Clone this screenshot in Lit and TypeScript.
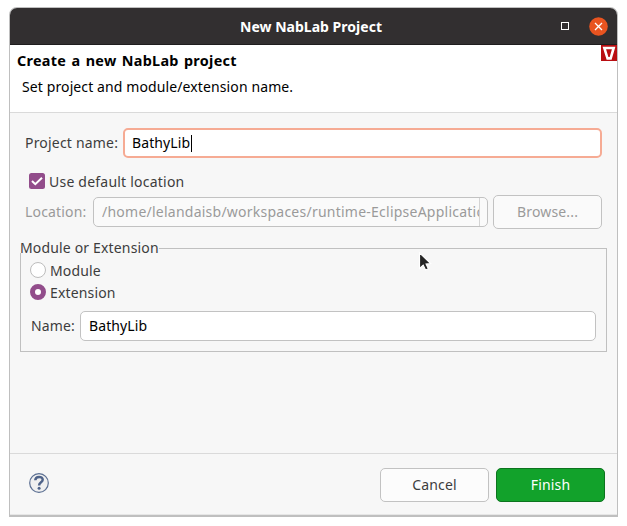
import { LitElement, html, css } from "lit";
import { customElement, state } from "lit/decorators.js";

@customElement("app-root")
export class AppRoot extends LitElement {
  @state() private kind: "Module" | "Extension" = "Extension";
  @state() private projectName = "BathyLib";
  @state() private location = "/home/lelandaisb/workspaces/runtime-EclipseApplication";

  static styles = css`
    :host {
      display: block;
      width: 627px;
      height: 526px;
      box-sizing: border-box;
      padding: 7px 9px 9px;
      background: #fff;
      overflow: hidden;
      font: 14px/20px "Noto Sans", sans-serif;
      letter-spacing: 0.16px;
      color: #3d3d3d;
      white-space: nowrap;
    }
    * { box-sizing: border-box; }
    .window {
      width: 609px;
      height: 510px;
      display: flex;
      flex-direction: column;
      border: 1px solid #bfbfbf;
      border-bottom-width: 2px;
      border-radius: 8px 8px 0 0;
      background: #f7f7f7;
      overflow: hidden;
    }
    .titlebar {
      flex: none;
      height: 37px;
      display: grid;
      grid-template-columns: 1fr auto 1fr;
      align-items: center;
      background: #322f30;
      border-bottom: 1px solid #1f1d1e;
      padding-right: 5px;
    }
    .title { grid-column: 2; color: #fff; font-weight: 700; letter-spacing: 0.02px; padding-top: 2px; }
    .controls { display: flex; justify-content: flex-end; align-items: center; gap: 20px; padding-right: 4px; }
    .max { width: 8px; height: 8px; border: 1px solid #fff; }
    .close { display: block; width: 19px; height: 19px; }
    .banner {
      flex: none;
      height: 68px;
      display: flex;
      justify-content: space-between;
      background: #fff;
      border-bottom: 1px solid #dadada;
      color: #000;
    }
    .heads { padding: 6px 0 0 7px; }
    .heading { font-weight: 700; font-size: 14.4px; letter-spacing: 0.3px; word-spacing: 1.2px; }
    .sub { margin: 6px 0 0 5px; letter-spacing: 0.11px; }
    .logo { display: block; width: 16px; height: 16px; }
    .content { flex: 1; padding: 15px 10px 0 10px; }
    .row { display: flex; align-items: center; }
    .project { height: 30px; padding: 0 5px; }
    .lbl-project { width: 98px; letter-spacing: 0.19px; }
    .field {
      height: 30px;
      flex: 1;
      display: flex;
      align-items: center;
      min-width: 0;
      border: 1px solid #c2c2c2;
      border-radius: 5px;
      background: #fff;
      color: #000;
      padding-left: 8px;
      letter-spacing: 0.1px;
      overflow: hidden;
    }
    .focus { border: 2px solid #f6ab94; padding-left: 7px; }
    .caret { width: 1px; height: 17px; margin-left: 1px; background: #000; }
    .default { height: 16px; margin: 15px 0 0 9px; gap: 4px; }
    .default span { letter-spacing: 0.22px; }
    .default span, .radio .text { padding-top: 2px; }
    .check { display: block; width: 16px; height: 16px; }
    .loc { height: 34px; margin-top: 6px; padding: 0 5px; color: #9a9a9a; }
    .lbl-loc { width: 68px; }
    .loc .field { background: #fafafa; color: #9a9a9a; letter-spacing: 0.24px; }
    .clip {
      flex: 1;
      min-width: 0;
      overflow: hidden;
      height: 28px;
      line-height: 28px;
      border-right: 1px solid #d4d4d4;
      margin-right: 7px;
    }
    .btn {
      width: 109px;
      height: 34px;
      display: flex;
      align-items: center;
      justify-content: center;
      border: 1px solid #c2c2c2;
      border-radius: 5px;
      background: #fcfcfc;
    }
    .browse { margin-left: 5px; background: #fafafa; }
    .group {
      height: 104px;
      margin: 19px 0 0;
      padding: 0 10px 0 9px;
      border: 1px solid #c0c0c0;
      display: flex;
      flex-direction: column;
    }
    .legend { align-self: flex-start; margin: -11px 0 5px -10px; height: 15px; background: #f7f7f7; }
    .radio { height: 16px; gap: 4px; margin-top: 4px; }
    .radio + .radio { margin-top: 6px; }
    .dot { width: 16px; height: 16px; border: 1px solid #bdbdbd; border-radius: 50%; background: #fff; }
    .dot.on { border: 5px solid #924d8b; }
    .name { margin-top: 11px; height: 30px; padding-left: 1px; }
    .lbl-name { width: 49px; }
    .footer {
      flex: none;
      height: 62px;
      border-top: 1px solid #dadada;
      display: flex;
      align-items: flex-start;
      gap: 7px;
      padding: 14px 12px 0 19px;
      box-shadow: inset 0 -1px #e6e6e6;
    }
    .help { width: 20px; height: 20px; margin: 5px auto 0 0; display: block; }
    .finish { background: #12a22b; border-color: #0c741e; color: #fff; }
    .pointer { position: absolute; left: 417px; top: 251px; width: 17px; height: 22px; }
  `;

  private radio(label: "Module" | "Extension") {
    return html`<div class="row radio" @click=${() => (this.kind = label)}>
      <span class="dot ${this.kind === label ? "on" : ""}"></span>
      <span class="text">${label}</span>
    </div>`;
  }

  render() {
    return html`
      <div class="window">
        <div class="titlebar">
          <span class="title">New NabLab Project</span>
          <div class="controls">
            <span class="max"></span>
            <svg class="close" viewBox="0 0 19 19">
              <circle cx="9.5" cy="9.5" r="9.3" fill="#e95420" />
              <path d="M6 6l7 7M13 6l-7 7" stroke="#fff" stroke-width="1.3" />
            </svg>
          </div>
        </div>
        <div class="banner">
          <div class="heads">
            <div class="heading">Create a new NabLab project</div>
            <div class="sub">Set project and module/extension name.</div>
          </div>
          <svg class="logo" viewBox="0 0 16 16">
            <path d="M0 0h16v16H0z" fill="#b90e12" />
            <path d="M1.6 1.8H14.4L10.6 14.8H5.6zM5.1 4.2L7.4 12H8.7L10.9 4.2z" fill="#fff" fill-rule="evenodd" />
          </svg>
        </div>
        <div class="content">
          <div class="row project">
            <div class="lbl-project">Project name:</div>
            <div class="field focus"><span>${this.projectName}</span><span class="caret"></span></div>
          </div>
          <div class="row default">
            <svg class="check" viewBox="0 0 16 16">
              <rect width="16" height="16" rx="2.5" fill="#924d8b" />
              <path d="M3 8l3.3 3.2L13 4.7" fill="none" stroke="#fff" stroke-width="2" />
            </svg>
            <span>Use default location</span>
          </div>
          <div class="row loc">
            <div class="lbl-loc">Location:</div>
            <div class="field"><div class="clip">${this.location}</div></div>
            <div class="btn browse">Browse...</div>
          </div>
          <div class="group">
            <div class="legend">Module or Extension</div>
            ${this.radio("Module")} ${this.radio("Extension")}
            <div class="row name">
              <div class="lbl-name">Name:</div>
              <div class="field">${this.projectName}</div>
            </div>
          </div>
        </div>
        <div class="footer">
          <svg class="help" viewBox="0 0 20 20">
            <circle cx="10" cy="10" r="9.3" fill="#f0f0f0" stroke="#5b6f92" stroke-width="1.2" />
            <path d="M6.3 7.3C6.4 2.8 13.7 2.9 13.7 6.8C13.7 9.4 10.1 9.2 10.1 12.4" fill="none" stroke="#4f6389" stroke-width="2.5" />
            <circle cx="10.1" cy="15.3" r="1.5" fill="#4f6389" />
          </svg>
          <div class="btn">Cancel</div>
          <div class="btn finish">Finish</div>
        </div>
      </div>
      <svg class="pointer" viewBox="0 0 18 24">
        <path d="M2.5 2v17l4-3.6 2.6 5.3 3-1.4-2.5-5.1 5-.4z" fill="#252525" stroke="#fff" stroke-width="1.2" />
      </svg>
    `;
  }
}
